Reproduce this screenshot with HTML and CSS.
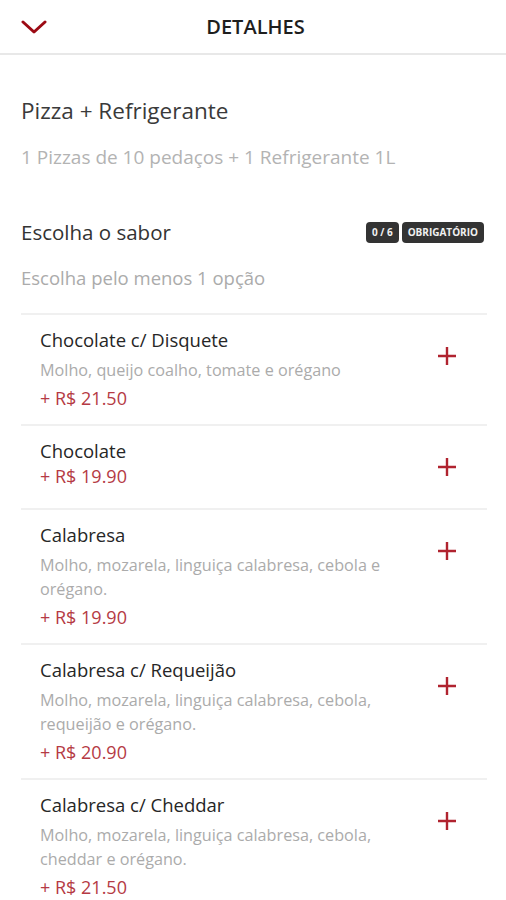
FILE: index.html
```html
<!DOCTYPE html>
<html lang="pt-BR">
<head>
<meta charset="utf-8">
<title>Detalhes</title>
<link rel="stylesheet" href="styles.css">
</head>
<body>
<header class="topbar">
  <button class="back" aria-label="Voltar">
    <svg width="26" height="14" viewBox="0 0 26 14"><path d="M2 2 L13 12 L24 2" fill="none" stroke="#9c0a14" stroke-width="3" stroke-linecap="round" stroke-linejoin="round"/></svg>
  </button>
  <h1 class="title">DETALHES</h1>
  <span class="spacer"></span>
</header>

<main class="content">
  <section class="product">
    <h2 class="product-name">Pizza + Refrigerante</h2>
    <p class="product-desc">1 Pizzas de 10 pedaços + 1 Refrigerante 1L</p>
  </section>

  <section class="group">
    <div class="group-head">
      <h3 class="group-title">Escolha o sabor</h3>
      <div class="badges">
        <span class="badge">0 / 6</span>
        <span class="badge">OBRIGATÓRIO</span>
      </div>
    </div>
    <p class="group-sub">Escolha pelo menos 1 opção</p>

    <ul class="options">
      <li class="option">
        <div class="option-info">
          <div class="option-name">Chocolate c/ Disquete</div>
          <div class="option-desc">Molho, queijo coalho, tomate e orégano</div>
          <div class="option-price">+ R$ 21.50</div>
        </div>
        <button class="add" aria-label="Adicionar"><svg width="20" height="20" viewBox="0 0 20 20"><path d="M10 1 V19 M1 10 H19" stroke="#b0232f" stroke-width="2.4"/></svg></button>
      </li>
      <li class="option">
        <div class="option-info">
          <div class="option-name">Chocolate</div>
          <div class="option-price">+ R$ 19.90</div>
        </div>
        <button class="add" aria-label="Adicionar"><svg width="20" height="20" viewBox="0 0 20 20"><path d="M10 1 V19 M1 10 H19" stroke="#b0232f" stroke-width="2.4"/></svg></button>
      </li>
      <li class="option">
        <div class="option-info">
          <div class="option-name">Calabresa</div>
          <div class="option-desc">Molho, mozarela, linguiça calabresa, cebola e orégano.</div>
          <div class="option-price">+ R$ 19.90</div>
        </div>
        <button class="add" aria-label="Adicionar"><svg width="20" height="20" viewBox="0 0 20 20"><path d="M10 1 V19 M1 10 H19" stroke="#b0232f" stroke-width="2.4"/></svg></button>
      </li>
      <li class="option">
        <div class="option-info">
          <div class="option-name">Calabresa c/ Requeijão</div>
          <div class="option-desc">Molho, mozarela, linguiça calabresa, cebola, requeijão e orégano.</div>
          <div class="option-price">+ R$ 20.90</div>
        </div>
        <button class="add" aria-label="Adicionar"><svg width="20" height="20" viewBox="0 0 20 20"><path d="M10 1 V19 M1 10 H19" stroke="#b0232f" stroke-width="2.4"/></svg></button>
      </li>
      <li class="option">
        <div class="option-info">
          <div class="option-name">Calabresa c/ Cheddar</div>
          <div class="option-desc">Molho, mozarela, linguiça calabresa, cebola, cheddar e orégano.</div>
          <div class="option-price">+ R$ 21.50</div>
        </div>
        <button class="add" aria-label="Adicionar"><svg width="20" height="20" viewBox="0 0 20 20"><path d="M10 1 V19 M1 10 H19" stroke="#b0232f" stroke-width="2.4"/></svg></button>
      </li>
    </ul>
  </section>
</main>
</body>
</html>
```
FILE: styles.css
```css
* { box-sizing: border-box; }
html, body { margin: 0; padding: 0; background: #fff; }
body {
  font-family: "Open Sans", "Lato", "Liberation Sans", sans-serif;
  color: #333;
}
.topbar {
  height: 55px;
  display: flex;
  align-items: center;
  justify-content: space-between;
  padding: 0 14px 0 19px;
  border-bottom: 2px solid #e8e8e8;
}
.back {
  width: 30px; height: 30px;
  padding: 0; border: 0; background: none;
  display: flex; align-items: center; justify-content: center;
}
.title {
  margin: 0;
  font-size: 20px;
  font-weight: 600;
  color: #1e1e1e;
}
.spacer { width: 30px; }
.content { padding: 0 19px 0 21px; }
.product { padding-top: 42px; }
.product-name {
  margin: 0;
  font-size: 22.5px;
  font-weight: 400;
  line-height: 28px;
  color: #3a3a3a;
}
.product-desc {
  margin: 21px 0 0;
  font-size: 19px;
  line-height: 22px;
  color: #b3b3b3;
}
.group { padding-top: 51px; }
.group-head {
  display: flex;
  align-items: center;
  justify-content: space-between;
}
.group-title {
  margin: 0;
  font-size: 20.5px;
  font-weight: 400;
  line-height: 26px;
  color: #333;
}
.badges { display: flex; gap: 3px; margin-right: 3px; }
.badge {
  background: #333;
  color: #f0f0f0;
  font-size: 10px;
  font-weight: 700;
  line-height: 21px;
  padding: 0 6px;
  border-radius: 4px;
}
.group-sub {
  margin: 22px 0 0;
  font-size: 18.5px;
  line-height: 22px;
  color: #ababab;
}
.options {
  list-style: none;
  margin: 24px 0 0;
  padding: 0;
}
.option {
  display: flex;
  align-items: flex-start;
  justify-content: space-between;
  border-top: 2px solid #f0f0f0;
  padding: 13px 12px 13px 19px;
}
.option-info { flex: 1; padding-right: 22px; }
.option-name {
  font-size: 18.5px;
  line-height: 24px;
  color: #262626;
}
.option-desc {
  margin: 6px 0 3px;
  font-size: 16.2px;
  line-height: 24px;
  color: #ababab;
}
.option-price {
  font-size: 18px;
  line-height: 26px;
  color: #b53a44;
}
.add {
  width: 56px; height: 56px;
  padding: 0; border: 0; background: none;
  display: flex; align-items: center; justify-content: center;
  flex: none;
}
```
